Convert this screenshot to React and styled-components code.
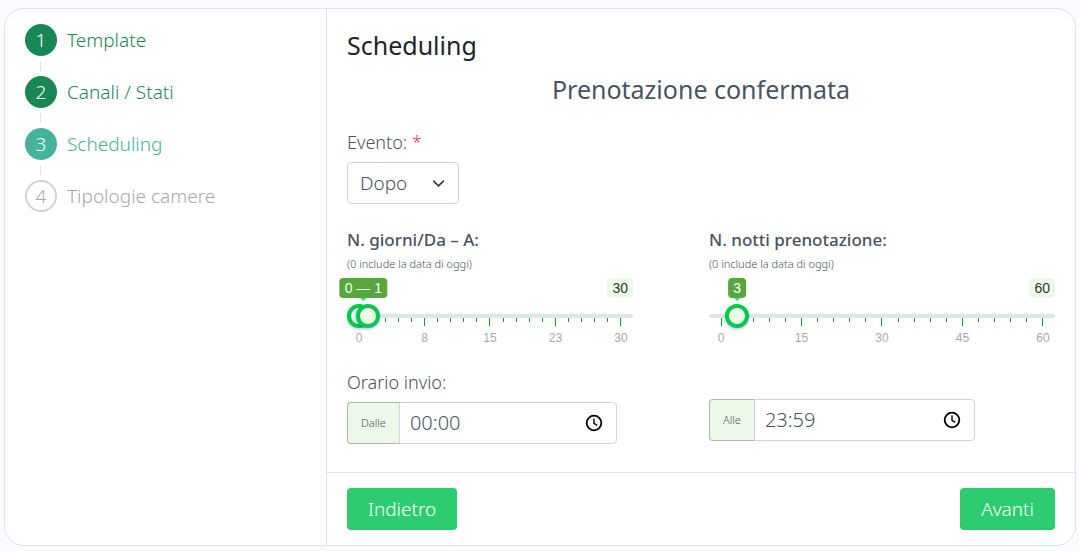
import React, { useState } from 'react'
import styled, { createGlobalStyle, css } from 'styled-components'

const bodyFont = '"Noto Sans", "Open Sans", sans-serif'
const sliderFont = '"Liberation Sans", Arial, sans-serif'

const steps = [
  { label: 'Template', status: 'done' },
  { label: 'Canali / Stati', status: 'done' },
  { label: 'Scheduling', status: 'current' },
  { label: 'Tipologie camere', status: 'todo' },
]

const stepColors = {
  done: '#198754',
  current: '#45b29d',
  todo: '#a5a8ad',
}

const Scale = ({ max }) => (
  <Ticks aria-hidden="true">
    {Array.from({ length: 21 }, (_, i) => (
      <Tick key={i}>
        <TickMark $major={i % 5 === 0} />
        {i % 5 === 0 && <TickLabel>{Math.round((max * i) / 20)}</TickLabel>}
      </Tick>
    ))}
  </Ticks>
)

const RangeSlider = ({ max, initial, labels }) => {
  const [values, setValues] = useState(initial)
  const middle = values.reduce((sum, v) => sum + v, 0) / values.length / max

  const handleChange = (index, value) => {
    const next = [...values]
    next[index] = value
    if (next.length > 1 && next[0] > next[1]) return
    setValues(next)
  }

  return (
    <SliderBox>
      <Bubbles>
        <BubbleRail>
          <Bubble style={{ left: `${middle * 100}%` }}>{values.join(' — ')}</Bubble>
        </BubbleRail>
        <MaxLabel>{max}</MaxLabel>
      </Bubbles>
      <Track>
        {values.map((value, index) => (
          <RangeInput
            key={index}
            type="range"
            min="0"
            max={max}
            value={value}
            aria-label={labels[index]}
            onChange={e => handleChange(index, Number(e.target.value))}
          />
        ))}
      </Track>
      <Scale max={max} />
    </SliderBox>
  )
}

const TimeField = ({ id, label, initial, wide }) => {
  const [time, setTime] = useState(initial)
  return (
    <InputGroup $wide={wide}>
      <Addon htmlFor={id}>{label}</Addon>
      <TimeInput id={id} type="text" value={time} onChange={e => setTime(e.target.value)} />
      <ClockButton type="button" aria-label={`Scegli orario ${label}`}>
        <svg width="18" height="18" viewBox="0 0 18 18" fill="none" stroke="#000" strokeWidth="1.8">
          <circle cx="9" cy="9" r="7.3" />
          <path d="M9 4.6V9.3L12.2 11.4" strokeWidth="1.4" />
        </svg>
      </ClockButton>
    </InputGroup>
  )
}

const App = () => {
  const [evento, setEvento] = useState('Dopo')

  return (
    <>
      <GlobalStyle />
      <Card>
        <Sidebar>
          <StepList>
            {steps.map((step, i) => (
              <Step key={step.label}>
                <StepLink href="#" $status={step.status}>
                  <StepNumber $status={step.status}>{i + 1}</StepNumber>
                  {step.label}
                </StepLink>
              </Step>
            ))}
          </StepList>
        </Sidebar>
        <Main>
          <Content>
            <Title>Scheduling</Title>
            <Subtitle>Prenotazione confermata</Subtitle>
            <Label htmlFor="evento">
              Evento: <Required>*</Required>
            </Label>
            <SelectBox>
              <Select id="evento" value={evento} onChange={e => setEvento(e.target.value)}>
                <option>Dopo</option>
                <option>Prima</option>
              </Select>
              <svg width="13" height="13" viewBox="0 0 16 16" fill="none" stroke="#343a40" strokeWidth="2" strokeLinecap="round" strokeLinejoin="round">
                <path d="m2 5 6 6 6-6" />
              </svg>
            </SelectBox>
            <Columns>
              <Column $inset>
                <SliderTitle>N. giorni/Da – A:</SliderTitle>
                <Hint>(0 include la data di oggi)</Hint>
                <RangeSlider max={30} initial={[0, 1]} labels={['Giorni da', 'Giorni a']} />
              </Column>
              <Column>
                <SliderTitle>N. notti prenotazione:</SliderTitle>
                <Hint>(0 include la data di oggi)</Hint>
                <RangeSlider max={60} initial={[3]} labels={['Notti prenotazione']} />
              </Column>
            </Columns>
            <TimeColumns>
              <div>
                <Label htmlFor="dalle">Orario invio:</Label>
                <TimeField id="dalle" label="Dalle" initial="00:00" wide />
              </div>
              <TimeField id="alle" label="Alle" initial="23:59" />
            </TimeColumns>
          </Content>
          <Footer>
            <Button type="button">Indietro</Button>
            <Button type="button">Avanti</Button>
          </Footer>
        </Main>
      </Card>
    </>
  )
}

const GlobalStyle = createGlobalStyle`
  * {
    box-sizing: border-box;
  }
  body {
    margin: 0;
    padding: 8px 3px 5px 4px;
    background: #fafbfe;
    color: #475463;
    font-family: ${bodyFont};
    font-weight: 300;
    font-size: 19px;
    line-height: 24px;
  }
  input, select, button {
    font: inherit;
    color: inherit;
  }
`

const Card = styled.div`
  display: flex;
  background: #fff;
  border: 1px solid #dee2ec;
  border-radius: 20px;
  overflow: hidden;
`

const Sidebar = styled.nav`
  width: 30%;
  padding: 15px 20px;
`

const StepList = styled.ol`
  list-style: none;
  margin: 0;
  padding: 0;
  display: flex;
  flex-direction: column;
  gap: 20px;
`

const Step = styled.li`
  position: relative;

  &:not(:last-child)::after {
    content: '';
    position: absolute;
    left: 15px;
    top: 37px;
    width: 1px;
    height: 10px;
    background: #dee2ec;
  }
`

const StepLink = styled.a`
  display: flex;
  align-items: center;
  gap: 10px;
  text-decoration: none;
  color: ${props => stepColors[props.$status]};
`

const StepNumber = styled.span`
  display: flex;
  align-items: center;
  justify-content: center;
  width: 32px;
  height: 32px;
  border-radius: 50%;
  ${props => props.$status === 'todo'
    ? css`
        border: 2px solid #ced4da;
      `
    : css`
        background: ${stepColors[props.$status]};
        color: #fff;
      `}
`

const Main = styled.main`
  flex: 1;
  min-width: 0;
  border-left: 1px solid #dee2ec;
`

const Content = styled.div`
  padding: 20px 20px 28px;
`

const Title = styled.h3`
  margin: 0;
  font-size: 25px;
  line-height: 32px;
  font-weight: 400;
  color: #212529;
`

const Subtitle = styled.h3`
  margin: 12px 0 25px;
  font-size: 25px;
  line-height: 32px;
  font-weight: 400;
  text-align: center;
`

const Label = styled.label`
  display: block;
  margin-bottom: 8px;
  font-size: 18px;
`

const Required = styled.span`
  color: #dc3545;
`

const SelectBox = styled.div`
  display: grid;
  width: 112px;
  align-items: center;

  > * {
    grid-area: 1 / 1;
  }
  > svg {
    justify-self: end;
    margin-right: 14px;
    pointer-events: none;
  }
`

const Select = styled.select`
  appearance: none;
  width: 100%;
  height: 42px;
  padding: 0 36px 0 12px;
  border: 1px solid #ced4da;
  border-radius: 4px;
  background: #fff;
`

const Columns = styled.div`
  display: grid;
  grid-template-columns: 1fr 1fr;
  column-gap: 16px;
  margin-top: 24px;
`

const Column = styled.section`
  padding-right: ${props => (props.$inset ? '60px' : '0')};
`

const SliderTitle = styled.h5`
  margin: 0;
  font-size: 17px;
  line-height: 24px;
  font-weight: 500;
`

const Hint = styled.div`
  margin: 4px 0 6px;
  font-size: 11px;
  line-height: 16px;
`

const SliderBox = styled.div`
  font-family: ${sliderFont};
  font-weight: 400;
`

const Bubbles = styled.div`
  display: flex;
  font-size: 14px;
  line-height: 20px;
`

const BubbleRail = styled.div`
  position: relative;
  flex: 1;
  margin: 0 -14px 0 12px;
`

const Bubble = styled.output`
  position: absolute;
  top: 0;
  transform: translateX(-50%);
  padding: 0 5px;
  border-radius: 4px;
  background: #57a83c;
  color: #fff;
  white-space: nowrap;

  &::after {
    content: '';
    position: absolute;
    top: 100%;
    left: 50%;
    margin-left: -3px;
    border: 3px solid transparent;
    border-top-color: #04f95a;
  }
`

const MaxLabel = styled.span`
  padding: 0 5px;
  border-radius: 4px;
  background: #edf9e8;
  color: #333;
`

const Track = styled.div`
  position: relative;
  z-index: 1;
  display: grid;
  align-items: center;
  height: 24px;
  margin-top: 6px;

  &::before {
    content: '';
    height: 4px;
    border-radius: 4px;
    background: #dee4ec;
  }
  > *, &::before {
    grid-area: 1 / 1;
  }
`

const thumb = css`
  appearance: none;
  box-sizing: border-box;
  width: 24px;
  height: 24px;
  border: 4px solid #04cb47;
  border-radius: 50%;
  background: #edf9e8;
  box-shadow: 0 1px 3px rgba(0, 0, 255, 0.3);
  pointer-events: auto;
  cursor: pointer;
`

const RangeInput = styled.input`
  appearance: none;
  width: 100%;
  height: 24px;
  margin: 0;
  background: transparent;
  pointer-events: none;

  &::-webkit-slider-thumb {
    ${thumb}
  }
  &::-moz-range-thumb {
    ${thumb}
  }
`

const Ticks = styled.div`
  display: flex;
  justify-content: space-between;
  height: 28px;
  margin-top: -10px;
  padding: 0 12px;
`

const Tick = styled.div`
  display: flex;
  flex-direction: column;
  align-items: center;
  width: 0;
`

const TickMark = styled.span`
  flex-shrink: 0;
  width: 1px;
  height: ${props => (props.$major ? '8px' : '4px')};
  background: #07a81c;
`

const TickLabel = styled.span`
  margin-top: 4px;
  font-size: 12px;
  line-height: 16px;
  color: #a8a8a8;
`

const TimeColumns = styled.div`
  display: grid;
  grid-template-columns: 1fr 1fr;
  column-gap: 16px;
  align-items: end;
  margin-top: 24px;
`

const InputGroup = styled.div`
  display: flex;
  width: ${props => (props.$wide ? '270px' : '266px')};
  height: 42px;
  margin-bottom: ${props => (props.$wide ? '0' : '3px')};
  border: 1px solid #ced4da;
  border-radius: 4px;
`

const Addon = styled.label`
  display: flex;
  align-items: center;
  margin: -1px 0 -1px -1px;
  padding: 0 13px;
  border: 1px solid #b0b5b0;
  border-right-color: #ced4da;
  border-radius: 4px 0 0 4px;
  background: #edf9e8;
  font-size: 11px;
`

const TimeInput = styled.input`
  flex: 1;
  min-width: 0;
  padding: 0 10px;
  border: 0;
  background: transparent;
  font-size: 20px;
`

const ClockButton = styled.button`
  display: flex;
  align-items: center;
  padding: 0 13px;
  border: 0;
  background: transparent;
`

const Footer = styled.footer`
  display: flex;
  justify-content: space-between;
  padding: 15px 20px;
  border-top: 1px solid #dee2ec;
`

const Button = styled.button`
  height: 42px;
  padding: 0 21px;
  border: 0;
  border-radius: 4px;
  background: #2ecc71;
  color: #fff;
  cursor: pointer;
`

export default App
